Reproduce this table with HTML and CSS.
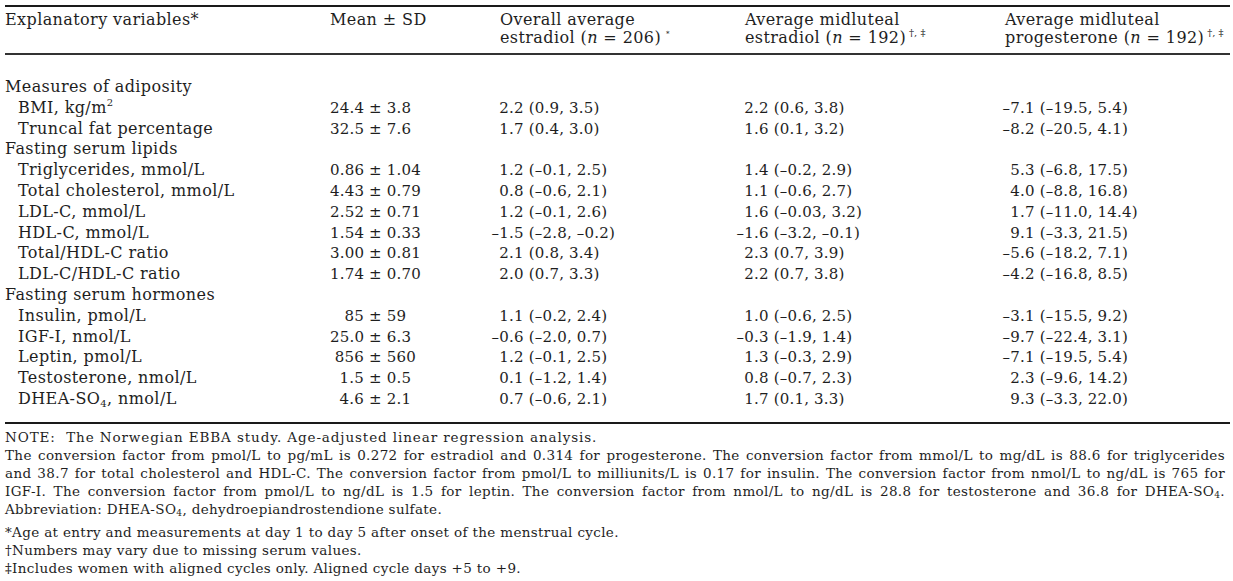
FILE: index.html
```html
<!DOCTYPE html>
<html>
<head>
<meta charset="utf-8">
<link rel="stylesheet" href="styles.css">
</head>
<body>
<div class="page">
  <div class="table">
    <div class="thead">
      <div class="cell">Explanatory variables*</div>
      <div class="cell">Mean ± SD</div>
      <div class="cell">Overall average<br>estradiol (<i>n</i> = 206)<sup class="tiny">*</sup></div>
      <div class="cell">Average midluteal<br>estradiol (<i>n</i> = 192)<sup>†, ‡</sup></div>
      <div class="cell">Average midluteal<br>progesterone (<i>n</i> = 192)<sup>†, ‡</sup></div>
    </div>
    <div class="tbody">
      <div class="row"><div class="cell group">Measures of adiposity</div></div>
      <div class="row">
        <div class="cell item">BMI, kg/m<sup>2</sup></div>
        <div class="cell num"><span class="m">24.4</span> ± 3.8</div>
        <div class="cell num v3"><span class="n">2</span>.2 (0.9, 3.5)</div>
        <div class="cell num v4"><span class="n">2</span>.2 (0.6, 3.8)</div>
        <div class="cell num v5"><span class="n">–7</span>.1 (–19.5, 5.4)</div>
      </div>
      <div class="row">
        <div class="cell item">Truncal fat percentage</div>
        <div class="cell num"><span class="m">32.5</span> ± 7.6</div>
        <div class="cell num v3"><span class="n">1</span>.7 (0.4, 3.0)</div>
        <div class="cell num v4"><span class="n">1</span>.6 (0.1, 3.2)</div>
        <div class="cell num v5"><span class="n">–8</span>.2 (–20.5, 4.1)</div>
      </div>
      <div class="row"><div class="cell group">Fasting serum lipids</div></div>
      <div class="row">
        <div class="cell item">Triglycerides, mmol/L</div>
        <div class="cell num"><span class="m">0.86</span> ± 1.04</div>
        <div class="cell num v3"><span class="n">1</span>.2 (–0.1, 2.5)</div>
        <div class="cell num v4"><span class="n">1</span>.4 (–0.2, 2.9)</div>
        <div class="cell num v5"><span class="n">5</span>.3 (–6.8, 17.5)</div>
      </div>
      <div class="row">
        <div class="cell item">Total cholesterol, mmol/L</div>
        <div class="cell num"><span class="m">4.43</span> ± 0.79</div>
        <div class="cell num v3"><span class="n">0</span>.8 (–0.6, 2.1)</div>
        <div class="cell num v4"><span class="n">1</span>.1 (–0.6, 2.7)</div>
        <div class="cell num v5"><span class="n">4</span>.0 (–8.8, 16.8)</div>
      </div>
      <div class="row">
        <div class="cell item">LDL-C, mmol/L</div>
        <div class="cell num"><span class="m">2.52</span> ± 0.71</div>
        <div class="cell num v3"><span class="n">1</span>.2 (–0.1, 2.6)</div>
        <div class="cell num v4"><span class="n">1</span>.6 (–0.03, 3.2)</div>
        <div class="cell num v5"><span class="n">1</span>.7 (–11.0, 14.4)</div>
      </div>
      <div class="row">
        <div class="cell item">HDL-C, mmol/L</div>
        <div class="cell num"><span class="m">1.54</span> ± 0.33</div>
        <div class="cell num v3"><span class="n">–1</span>.5 (–2.8, –0.2)</div>
        <div class="cell num v4"><span class="n">–1</span>.6 (–3.2, –0.1)</div>
        <div class="cell num v5"><span class="n">9</span>.1 (–3.3, 21.5)</div>
      </div>
      <div class="row">
        <div class="cell item">Total/HDL-C ratio</div>
        <div class="cell num"><span class="m">3.00</span> ± 0.81</div>
        <div class="cell num v3"><span class="n">2</span>.1 (0.8, 3.4)</div>
        <div class="cell num v4"><span class="n">2</span>.3 (0.7, 3.9)</div>
        <div class="cell num v5"><span class="n">–5</span>.6 (–18.2, 7.1)</div>
      </div>
      <div class="row">
        <div class="cell item">LDL-C/HDL-C ratio</div>
        <div class="cell num"><span class="m">1.74</span> ± 0.70</div>
        <div class="cell num v3"><span class="n">2</span>.0 (0.7, 3.3)</div>
        <div class="cell num v4"><span class="n">2</span>.2 (0.7, 3.8)</div>
        <div class="cell num v5"><span class="n">–4</span>.2 (–16.8, 8.5)</div>
      </div>
      <div class="row"><div class="cell group">Fasting serum hormones</div></div>
      <div class="row">
        <div class="cell item">Insulin, pmol/L</div>
        <div class="cell num"><span class="m">85</span> ± 59</div>
        <div class="cell num v3"><span class="n">1</span>.1 (–0.2, 2.4)</div>
        <div class="cell num v4"><span class="n">1</span>.0 (–0.6, 2.5)</div>
        <div class="cell num v5"><span class="n">–3</span>.1 (–15.5, 9.2)</div>
      </div>
      <div class="row">
        <div class="cell item">IGF-I, nmol/L</div>
        <div class="cell num"><span class="m">25.0</span> ± 6.3</div>
        <div class="cell num v3"><span class="n">–0</span>.6 (–2.0, 0.7)</div>
        <div class="cell num v4"><span class="n">–0</span>.3 (–1.9, 1.4)</div>
        <div class="cell num v5"><span class="n">–9</span>.7 (–22.4, 3.1)</div>
      </div>
      <div class="row">
        <div class="cell item">Leptin, pmol/L</div>
        <div class="cell num"><span class="m">856</span> ± 560</div>
        <div class="cell num v3"><span class="n">1</span>.2 (–0.1, 2.5)</div>
        <div class="cell num v4"><span class="n">1</span>.3 (–0.3, 2.9)</div>
        <div class="cell num v5"><span class="n">–7</span>.1 (–19.5, 5.4)</div>
      </div>
      <div class="row">
        <div class="cell item">Testosterone, nmol/L</div>
        <div class="cell num"><span class="m">1.5</span> ± 0.5</div>
        <div class="cell num v3"><span class="n">0</span>.1 (–1.2, 1.4)</div>
        <div class="cell num v4"><span class="n">0</span>.8 (–0.7, 2.3)</div>
        <div class="cell num v5"><span class="n">2</span>.3 (–9.6, 14.2)</div>
      </div>
      <div class="row">
        <div class="cell item">DHEA-SO<sub>4</sub>, nmol/L</div>
        <div class="cell num"><span class="m">4.6</span> ± 2.1</div>
        <div class="cell num v3"><span class="n">0</span>.7 (–0.6, 2.1)</div>
        <div class="cell num v4"><span class="n">1</span>.7 (0.1, 3.3)</div>
        <div class="cell num v5"><span class="n">9</span>.3 (–3.3, 22.0)</div>
      </div>
    </div>
  </div>
  <div class="notes">
    <div class="line wide">NOTE:&nbsp; The Norwegian EBBA study. Age-adjusted linear regression analysis.</div>
    <div class="line just">The conversion factor from pmol/L to pg/mL is 0.272 for estradiol and 0.314 for progesterone. The conversion factor from mmol/L to mg/dL is 88.6 for triglycerides</div>
    <div class="line just">and 38.7 for total cholesterol and HDL-C. The conversion factor from pmol/L to milliunits/L is 0.17 for insulin. The conversion factor from nmol/L to ng/dL is 765 for</div>
    <div class="line just">IGF-I. The conversion factor from pmol/L to ng/dL is 1.5 for leptin. The conversion factor from nmol/L to ng/dL is 28.8 for testosterone and 36.8 for DHEA-SO<sub>4</sub>.</div>
    <div class="line">Abbreviation: DHEA-SO<sub>4</sub>, dehydroepiandrostendione sulfate.</div>
    <div class="line fn">*Age at entry and measurements at day 1 to day 5 after onset of the menstrual cycle.</div>
    <div class="line">†Numbers may vary due to missing serum values.</div>
    <div class="line">‡Includes women with aligned cycles only. Aligned cycle days +5 to +9.</div>
  </div>
</div>
</body>
</html>
```
FILE: styles.css
```css
html, body {
  margin: 0;
  padding: 0;
  background: #fff;
}
.page {
  padding: 5px 3px 0 5px;
  font-family: "DejaVu Serif", "Liberation Serif", serif;
  color: #1e1e1e;
}
.table {
  border-top: 2px solid #1a1a1a;
  border-bottom: 2px solid #1a1a1a;
  padding-bottom: 12px;
}
.thead, .row {
  display: grid;
  grid-template-columns: 325px 170px 245px 260px 1fr;
}
.thead {
  font-size: 16px;
  letter-spacing: 0.4px;
  line-height: 18px;
  padding: 4px 0 6px;
  border-bottom: 2px solid #333;
}
.thead i { font-style: italic; }
.thead sup {
  font-size: 9px;
  vertical-align: 7px;
  line-height: 0;
  margin-left: 3px;
  letter-spacing: 0;
}
.thead sup.tiny { font-size: 7px; margin-left: 5px; }
.tbody {
  padding-top: 22px;
  font-size: 16px;
  letter-spacing: 0.4px;
}
.row {
  height: 20.8px;
  line-height: 20.8px;
  white-space: nowrap;
}
.item { padding-left: 13px; }
.num {
  font-size: 15px;
  letter-spacing: 0.2px;
}
.cell sup, .cell sub {
  font-size: 10px;
  line-height: 0;
}
.cell sup { vertical-align: 7px; }
.cell sub { vertical-align: -3px; }
.m {
  display: inline-block;
  width: 34px;
  text-align: right;
}
.n {
  display: inline-block;
  text-align: right;
}
.v3 .n, .v4 .n {
  width: 24px;
  margin-left: -15px;
}
.v5 .n {
  width: 30px;
  margin-left: -15px;
}
.notes {
  padding-top: 4px;
  font-size: 13.5px;
  letter-spacing: 0.35px;
  line-height: 18px;
  width: 1220px;
}
.line { white-space: nowrap; }
.line.wide { letter-spacing: 0.9px; }
.line.just {
  text-align: justify;
  text-align-last: justify;
  white-space: normal;
}
.notes sub {
  font-size: 9px;
  line-height: 0;
  vertical-align: -2px;
}
.fn { margin-top: 5px; }
```
